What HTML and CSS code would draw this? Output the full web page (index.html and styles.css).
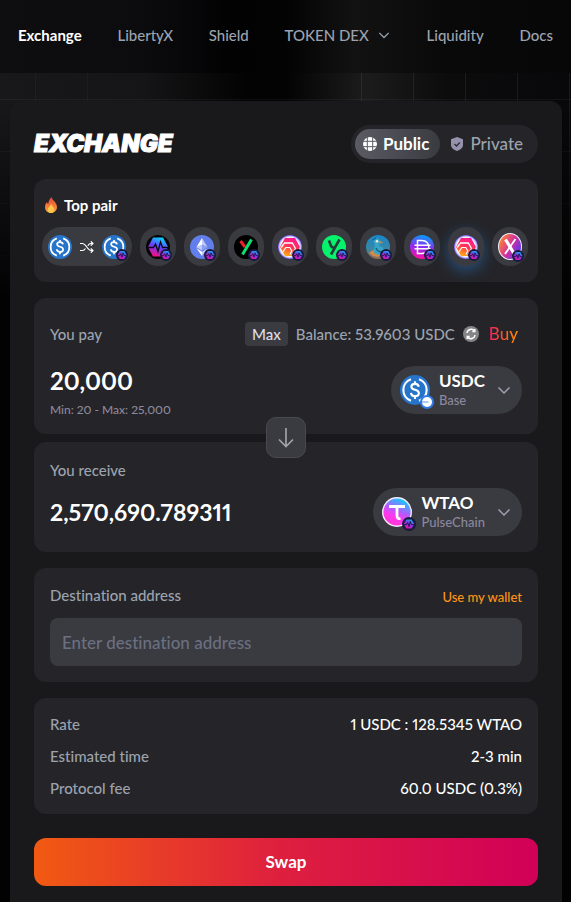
FILE: index.html
```html
<!DOCTYPE html>
<html lang="en">
<head>
<meta charset="utf-8">
<meta name="viewport" content="width=device-width, initial-scale=1">
<title>Exchange</title>
<link rel="stylesheet" href="styles.css">
</head>
<body>
<svg class="sprite" aria-hidden="true">
  <defs>
    <linearGradient id="g-pulse" x1="0.7" y1="0" x2="0.3" y2="1"><stop offset="0" stop-color="#00dcff"/><stop offset="0.5" stop-color="#6a3cff"/><stop offset="1" stop-color="#ff0a78"/></linearGradient>
    <linearGradient id="g-badge" x1="0.8" y1="0" x2="0.2" y2="1"><stop offset="0" stop-color="#00b4f0"/><stop offset="0.5" stop-color="#8a35e8"/><stop offset="1" stop-color="#f00a98"/></linearGradient>
    <linearGradient id="g-hex" x1="0.7" y1="0" x2="0.3" y2="1"><stop offset="0" stop-color="#ff1493"/><stop offset="0.5" stop-color="#ff3355"/><stop offset="1" stop-color="#ffb010"/></linearGradient>
    <linearGradient id="g-dai" x1="0.6" y1="0" x2="0.4" y2="1"><stop offset="0" stop-color="#00a2ff"/><stop offset="0.5" stop-color="#8b2cf5"/><stop offset="1" stop-color="#ff0fa0"/></linearGradient>
    <linearGradient id="g-x" x1="0" y1="0.2" x2="1" y2="0.8"><stop offset="0" stop-color="#ff8a2a"/><stop offset="0.5" stop-color="#d5319b"/><stop offset="1" stop-color="#4b35ff"/></linearGradient>
    <linearGradient id="g-tao" x1="0.75" y1="0" x2="0.3" y2="1"><stop offset="0" stop-color="#00d9ff"/><stop offset="0.45" stop-color="#b05cff"/><stop offset="0.7" stop-color="#ff38ec"/><stop offset="1" stop-color="#ff35d0"/></linearGradient>
    <linearGradient id="g-bird" x1="0" y1="0" x2="0" y2="1"><stop offset="0" stop-color="#1687c9"/><stop offset="0.6" stop-color="#3b86a5"/><stop offset="1" stop-color="#9a6a4d"/></linearGradient>
    <linearGradient id="g-fire" x1="0" y1="0" x2="0" y2="1"><stop offset="0" stop-color="#e9433a"/><stop offset="0.55" stop-color="#f47b3a"/><stop offset="1" stop-color="#f9a23c"/></linearGradient>
    <radialGradient id="g-halo"><stop offset="0.78" stop-color="#ffffff"/><stop offset="0.9" stop-color="#b5b8ff"/><stop offset="1" stop-color="#6a45ee"/></radialGradient>
  </defs>
  <symbol id="usdc" viewBox="0 0 24 24"><circle cx="12" cy="12" r="12" fill="#2775ca"/><path d="M8.800 3.400a9.100 9.100 0 0 0 0 17.200M15.200 3.400a9.100 9.100 0 0 1 0 17.200" fill="none" stroke="#fff" stroke-width="1.700"/><path d="M15 9.400c-.2-1.500-1.300-2.300-3-2.300-1.800 0-2.900.9-2.900 2.200 0 3.400 6 1.600 6 5.100 0 1.500-1.200 2.500-3.100 2.500-1.900 0-3.100-1-3.200-2.600M12 5v2.200M12 17v2.200" fill="none" stroke="#fff" stroke-width="1.700"/></symbol>
  <symbol id="chain" viewBox="0 0 14 14"><circle cx="7" cy="7" r="7" fill="#171a3d"/><path d="M4.400 2.400h5.200L12.300 7l-2.700 4.600H4.400L1.700 7z" fill="url(#g-badge)"/><path d="M2 7.500h2.600l1-2 1.400 4 1.300-5 1 3h2.700" fill="none" stroke="#221446" stroke-width="1"/></symbol>
  <symbol id="pulse" viewBox="0 0 24 24"><circle cx="12" cy="12" r="12" fill="#050507"/><path d="M7 2.500h10l5 9.500-5 9.500H7L2 12z" fill="url(#g-pulse)"/><path d="M1 12.500h6.500L9.500 9l2.500 7.500L14.500 7l2 5.500H23" fill="none" stroke="#090713" stroke-width="1.300"/></symbol>
  <symbol id="eth" viewBox="0 0 24 24"><circle cx="12" cy="12" r="12" fill="#627eea"/><path d="M12 3v6.700l5.600 2.500z" fill="#c0cbf7"/><path d="M12 3 6.400 12.200 12 9.700z" fill="#fff"/><path d="M12 16.700V21l5.600-7.800z" fill="#c0cbf7"/><path d="M12 21v-4.300l-5.600-3.500z" fill="#fff"/><path d="m12 15.500 5.600-3.300L12 9.700z" fill="#8b9ff0"/><path d="m6.400 12.200 5.600 3.300V9.700z" fill="#c0cbf7"/></symbol>
  <symbol id="ydark" viewBox="0 0 24 24"><circle cx="12" cy="12" r="12" fill="#000"/><path d="m6.500 6 4.500 6" stroke="#f01f2c" stroke-width="3"/><path d="M17.500 4.500 8.500 19.500" stroke="#08e070" stroke-width="3"/></symbol>
  <symbol id="ygreen" viewBox="0 0 24 24"><circle cx="12" cy="12" r="12" fill="#05f26c"/><path d="M7 5.500 9 11q.6 1.600 3 1.500M17.500 4.500 9 19.500" fill="none" stroke="#263b3b" stroke-width="2.600"/></symbol>
  <symbol id="hex" viewBox="0 0 24 24"><circle cx="12" cy="12" r="12" fill="url(#g-halo)"/><path d="M7 3h10l5 9-5 9H7l-5-9z" fill="url(#g-hex)"/><path d="M3.200 12.500 6.500 8h7.800l3.200 5.500-3.200 5.500" fill="none" stroke="#fff" stroke-width="1.300"/><path d="M5 17 7.800 12.500h4l2 3.500-2 3.500" fill="none" stroke="#fff" stroke-width="1.100"/></symbol>
  <symbol id="bird" viewBox="0 0 24 24"><circle cx="12" cy="12" r="12" fill="url(#g-bird)"/><path d="M7 5c2-3 7-2 7 2l-1 4c5 1 7 5 5 8-4 3-10 2-11-3l2-6z" fill="#35a6c9"/><path d="m13.500 6 4 1.500-4 1zM3 18l4-3 2 4 5 1-2 2-5-1z" fill="#d68a47"/><path d="M10 13c1 3 3 4 6 4M7 5l3-2" fill="none" stroke="#17617e" stroke-width="1.300"/><circle cx="11" cy="6.200" r="1.300" fill="#f1ead0"/></symbol>
  <symbol id="dai" viewBox="0 0 24 24"><circle cx="12" cy="12" r="12" fill="url(#g-dai)"/><path d="M7.500 5.500H12c9 0 9 13 0 13H7.500zM4.500 10.200h16M4.500 13.800h16" fill="none" stroke="#fff" stroke-width="1.500"/></symbol>
  <symbol id="xtoken" viewBox="0 0 24 27"><ellipse cx="12" cy="13.500" rx="12" ry="13.500" fill="#f3efff"/><ellipse cx="12" cy="13.500" rx="11" ry="12.500" fill="url(#g-x)"/><path d="m7.500 6.500 8.500 14" stroke="#fff" stroke-width="3.200"/><path d="M17.500 6 7 21" stroke="#fff" stroke-width="1.800"/></symbol>
  <symbol id="tao" viewBox="0 0 30 30"><circle cx="15" cy="15" r="15" fill="#f4edff"/><circle cx="15" cy="15" r="13.600" fill="url(#g-tao)"/><path d="M7 9.500h16M15 8.500v10c0 2.500 1 3.500 3.500 3" fill="none" stroke="#fff" stroke-width="2.800"/></symbol>
  <symbol id="base" viewBox="0 0 14 14"><circle cx="7" cy="7" r="7" fill="#2f7ae5"/><circle cx="7" cy="7" r="5" fill="#fff"/><path d="M2 7h6.500" stroke="#79a9ed" stroke-width="1.200"/></symbol>
  <symbol id="chevron" viewBox="0 0 14 14"><path d="m1.500 4.500 5.500 5.500 5.500-5.500" fill="none" stroke="currentColor" stroke-width="1.500"/></symbol>
</svg>

<header class="topbar">
  <nav class="nav">
    <a class="active" href="#">Exchange</a>
    <a href="#">LibertyX</a>
    <a href="#">Shield</a>
    <button type="button">TOKEN DEX <svg class="nav-arrow"><use href="#chevron"/></svg></button>
    <a href="#">Liquidity</a>
    <a href="#">Docs</a>
  </nav>
</header>

<main class="card">
  <div class="card-head">
    <h1>EXCHANGE</h1>
    <div class="modes">
      <button class="mode selected" type="button">
        <svg viewBox="0 0 14 14"><circle cx="7" cy="7" r="7" fill="#fff"/><path d="M4.300 0v14M9.700 0v14M0 4.300h14M0 9.700h14" stroke="#5b5b64" stroke-width="1"/></svg>Public</button>
      <button class="mode" type="button">
        <svg viewBox="0 0 14 14"><path d="M7 0 13 2.300V8c0 3-3 5-6 6-3-1-6-3-6-6V2.300z" fill="#9692ad"/><path d="m4.500 7 2 2 3.300-3.500" fill="none" stroke="#2c2b34" stroke-width="1.300"/></svg>Private</button>
    </div>
  </div>

  <section class="panel pairs">
    <h2><svg viewBox="0 0 12 16"><path d="M6.500 0c.3 3 5.500 5.300 5.500 10 0 3.500-2.700 6-6 6s-6-2.300-6-6c0-2.500 1.200-4 2-5 .1 1 .5 1.600 1.200 2C3.500 4.300 4.800 1.700 6.500 0z" fill="url(#g-fire)"/><path d="M6.200 7c.3 2 3 3 3 5.600 0 2-1.400 3.400-3.200 3.400s-3.200-1.300-3.200-3.200C2.800 10.500 5 9.500 6.200 7z" fill="#fcc84b"/></svg>Top pair</h2>
    <div class="tokens">
      <button class="token pair" type="button" aria-label="USDC to USDC">
        <svg class="coin"><use href="#usdc"/></svg>
        <svg class="shuffle" viewBox="0 0 14 12"><path d="M0 2.500h2.500C6 2.500 7.500 9.500 11 9.500h2M0 9.500h2.500c1.300 0 2.200-.8 3-2M7.800 4.700c.8-1.300 1.800-2.200 3.200-2.200h2M10.800.3 13 2.500l-2.200 2.200M10.800 7.300 13 9.500l-2.200 2.200" fill="none" stroke="#fff" stroke-width="1.200"/></svg>
        <span class="stack"><svg class="coin"><use href="#usdc"/></svg><svg class="badge"><use href="#chain"/></svg></span>
      </button>
      <button class="token" type="button" aria-label="PLS"><span class="stack"><svg class="coin"><use href="#pulse"/></svg><svg class="badge"><use href="#chain"/></svg></span></button>
      <button class="token" type="button" aria-label="ETH"><span class="stack"><svg class="coin"><use href="#eth"/></svg><svg class="badge"><use href="#chain"/></svg></span></button>
      <button class="token" type="button" aria-label="Y"><span class="stack"><svg class="coin"><use href="#ydark"/></svg><svg class="badge"><use href="#chain"/></svg></span></button>
      <button class="token" type="button" aria-label="HEX"><span class="stack"><svg class="coin"><use href="#hex"/></svg><svg class="badge"><use href="#chain"/></svg></span></button>
      <button class="token" type="button" aria-label="Y"><span class="stack"><svg class="coin"><use href="#ygreen"/></svg><svg class="badge"><use href="#chain"/></svg></span></button>
      <button class="token" type="button" aria-label="Bird"><span class="stack"><svg class="coin"><use href="#bird"/></svg><svg class="badge"><use href="#chain"/></svg></span></button>
      <button class="token" type="button" aria-label="DAI"><span class="stack"><svg class="coin"><use href="#dai"/></svg><svg class="badge"><use href="#chain"/></svg></span></button>
      <button class="token glow" type="button" aria-label="HEX"><span class="stack"><svg class="coin"><use href="#hex"/></svg><svg class="badge"><use href="#chain"/></svg></span></button>
      <button class="token" type="button" aria-label="X"><span class="stack"><svg class="coin tall"><use href="#xtoken"/></svg><svg class="badge"><use href="#chain"/></svg></span></button>
    </div>
  </section>

  <div class="swap">
    <section class="panel pay">
      <div class="row balance-row">
        <label for="pay">You pay</label>
        <div class="balance">
          <button class="max" type="button">Max</button>
          <span>Balance: 53.9603 USDC</span>
          <button class="refresh" type="button" aria-label="Refresh balance"><svg viewBox="0 0 16 16"><circle cx="8" cy="8" r="8" fill="#858587"/><path d="M4 7a4.200 4.200 0 0 1 7.500-2M12 9a4.200 4.200 0 0 1-7.500 2M11.800 3v2.500H9.300M4.200 13v-2.500h2.500" fill="none" stroke="#fff" stroke-width="1.400"/></svg></button>
          <a class="buy" href="#">Buy</a>
        </div>
      </div>
      <div class="row">
        <div class="amount"><input id="pay" type="text" value="20,000"><small>Min: 20 - Max: 25,000</small></div>
        <button class="select" type="button">
          <span class="stack"><svg class="coin-lg"><use href="#usdc"/></svg><svg class="badge"><use href="#base"/></svg></span>
          <span class="name"><b>USDC</b><span>Base</span></span>
          <svg class="arrow"><use href="#chevron"/></svg>
        </button>
      </div>
    </section>
    <button class="flip" type="button" aria-label="Swap direction"><svg viewBox="0 0 20 20"><path d="M10 0v18.500M3 11.500l7 7 7-7" fill="none" stroke="currentColor" stroke-width="1.700"/></svg></button>
    <section class="panel receive">
      <label for="receive">You receive</label>
      <div class="row">
        <div class="amount"><input id="receive" type="text" value="2,570,690.789311" readonly></div>
        <button class="select" type="button">
          <span class="stack"><svg class="coin-lg"><use href="#tao"/></svg><svg class="badge"><use href="#chain"/></svg></span>
          <span class="name"><b>WTAO</b><span>PulseChain</span></span>
          <svg class="arrow"><use href="#chevron"/></svg>
        </button>
      </div>
    </section>
  </div>

  <section class="panel destination">
    <div class="row"><label for="dest">Destination address</label><a class="wallet" href="#">Use my wallet</a></div>
    <input id="dest" type="text" placeholder="Enter destination address">
  </section>

  <dl class="panel details">
    <div><dt>Rate</dt><dd>1 USDC : 128.5345 WTAO</dd></div>
    <div><dt>Estimated time</dt><dd>2-3 min</dd></div>
    <div><dt>Protocol fee</dt><dd>60.0 USDC (0.3%)</dd></div>
  </dl>

  <button class="submit" type="button">Swap</button>
</main>
</body>
</html>
```
FILE: styles.css
```css
* { box-sizing: border-box; }

html { background: #020203; }

body {
  margin: 0;
  min-height: 100vh;
  overflow-x: hidden;
  font: 500 15px/20px Lato, "Liberation Sans", sans-serif;
  font-variant-ligatures: none;
  font-variant-numeric: proportional-nums;
  color: #9ca3af;
  background:
    linear-gradient(#0000 0, #0000 100px, #020203 300px),
    repeating-linear-gradient(90deg, #0000 0 35px, #ffffff08 35px 36px, #0000 36px 52px) left / 130px 100% no-repeat,
    repeating-linear-gradient(270deg, #0000 0 1px, #ffffff12 1px 2px, #0000 2px 52px) right / 230px 100% no-repeat,
    repeating-linear-gradient(#0000 0 47px, #ffffff0b 47px 48px, #0000 48px 52px),
    linear-gradient(90deg, #18181a 0, #151517 25%, #030303 43%, #030303 50%, #1c1c1d 64%, #0c0c0d 78%, #08080a);
}

button, input { font: inherit; font-variant: inherit; color: inherit; border: 0; padding: 0; margin: 0; background: none; }
button { cursor: pointer; }
a { color: inherit; text-decoration: none; }
h1, h2, dl, dd { margin: 0; }
svg { display: block; flex: none; }

.sprite { position: absolute; width: 0; height: 0; }

.topbar {
  height: 73px;
  padding: 0 18px;
  background: linear-gradient(90deg, #0e0e10 0, #0c0c0e 25%, #020203 40%, #030304 50%, #121213 62%, #09090a 78%, #070708);
}

.nav { display: flex; align-items: center; justify-content: space-between; height: 70px; }
.nav .active { color: #fff; font-weight: 700; }
.nav button { display: flex; align-items: center; gap: 8px; }
.nav-arrow { width: 14px; height: 12px; }

.card {
  margin: 28px 9px 0 10px;
  padding: 24px 24px 32px;
  border-radius: 12px;
  background: #19191b;
}

.card-head { display: flex; align-items: center; justify-content: space-between; height: 38px; }

h1 {
  font: italic 900 24px/24px Inter, sans-serif;
  color: #fff;
  -webkit-text-stroke: 1px #fff;
}

.modes { display: flex; gap: 2px; padding: 4px; border-radius: 20px; background: #252529; }

.mode {
  display: flex;
  align-items: center;
  gap: 6px;
  height: 30px;
  padding: 0 11px 0 8px;
  border-radius: 15px;
  font-size: 17px;
}
.mode svg { width: 14px; height: 14px; }
.mode.selected { color: #fff; font-weight: 700; background: linear-gradient(90deg, #5b5b64, #3a3a41); }

.panel { border-radius: 12px; background: #252529; padding: 16px; }

.pairs { margin-top: 16px; height: 103px; padding: 16px 8px; }

h2 {
  display: flex;
  align-items: center;
  gap: 7px;
  padding-left: 3px;
  font-size: 15px;
  line-height: 20px;
  color: #fff;
}
h2 svg { width: 12px; height: 16px; }

.tokens { display: flex; gap: 8px; margin-top: 12px; }

.token {
  display: grid;
  place-items: center;
  flex: none;
  width: 36px;
  height: 39px;
  border-radius: 20px;
  background: #3a3a41;
}
.token.pair { display: flex; justify-content: space-between; width: 90px; padding: 0 6px; }
.token.glow { box-shadow: 0 5px 14px #2876c580; }

.shuffle { width: 14px; height: 12px; }
.coin { width: 24px; height: 24px; }
.coin.tall { height: 27px; }
.coin-lg { width: 30px; height: 30px; }

.stack { position: relative; flex: none; }
.badge { position: absolute; right: -2px; bottom: -2px; width: 12px; height: 12px; }
.select .badge { right: -4px; bottom: -4px; width: 14px; height: 14px; }

.swap { margin-top: 16px; }
.row { display: flex; align-items: center; justify-content: space-between; }

.pay { padding-top: 24px; }
.balance-row { height: 24px; }
.balance { display: flex; align-items: center; gap: 8px; }
.max { height: 24px; padding: 0 7px; border-radius: 4px; color: #dddde6; background: #3a3a41; }
.refresh svg { width: 16px; height: 16px; }

.buy {
  margin: 0 4px 0 2px;
  font-size: 17px;
  color: transparent;
  background: linear-gradient(90deg, #f21f5c, #ff9000);
  background-clip: text;
}

.pay .row + .row { margin-top: 20px; align-items: flex-start; }

.amount { display: flex; flex-direction: column; flex: 1; min-width: 0; }
.amount input { width: 100%; height: 28px; font-size: 24px; font-weight: 700; color: #fff; }
.amount small { margin-top: 8px; font-size: 12px; line-height: 16px; color: #8b889c; }
.receive .amount input { font-size: 23px; }

.select {
  display: flex;
  align-items: center;
  height: 48px;
  padding: 0 11px 0 9px;
  border-radius: 24px;
  text-align: left;
  background: #3a3a41;
}
.name { display: flex; flex-direction: column; margin: 0 12px 0 9px; }
.name b { font-size: 17px; line-height: 21px; color: #fff; }
.name span { font-size: 13px; line-height: 19px; color: #8b889c; }
.arrow { width: 14px; height: 14px; }

.flip {
  position: relative;
  display: grid;
  place-items: center;
  width: 40px;
  height: 41px;
  margin: -17px auto -16px;
  border: 1px solid #49494f;
  border-radius: 10px;
  color: #a3a1ab;
  background: #3a3a41;
}
.flip svg { width: 20px; height: 20px; }

.receive { padding-top: 18px; }
.receive label { display: block; }
.receive .row { margin-top: 8px; }

.destination { margin-top: 16px; }
.destination .row { align-items: flex-start; }
.destination label { line-height: 22px; }
.wallet { font-size: 13px; line-height: 26px; color: #ff9416; }
.destination input {
  display: block;
  width: 100%;
  height: 48px;
  margin-top: 8px;
  padding: 0 12px;
  border-radius: 8px;
  font-size: 17px;
  background: #3a3a41;
}
.destination input::placeholder { color: #6b7080; opacity: 1; }

.details { display: grid; gap: 12px; margin-top: 16px; }
.details div { display: flex; justify-content: space-between; }
.details dd { color: #fff; }

.submit {
  display: block;
  width: 100%;
  height: 48px;
  margin-top: 24px;
  border-radius: 12px;
  font-size: 17px;
  font-weight: 700;
  color: #fff;
  background: linear-gradient(90deg, #f15a12, #de203e 48%, #d10058);
}
```
